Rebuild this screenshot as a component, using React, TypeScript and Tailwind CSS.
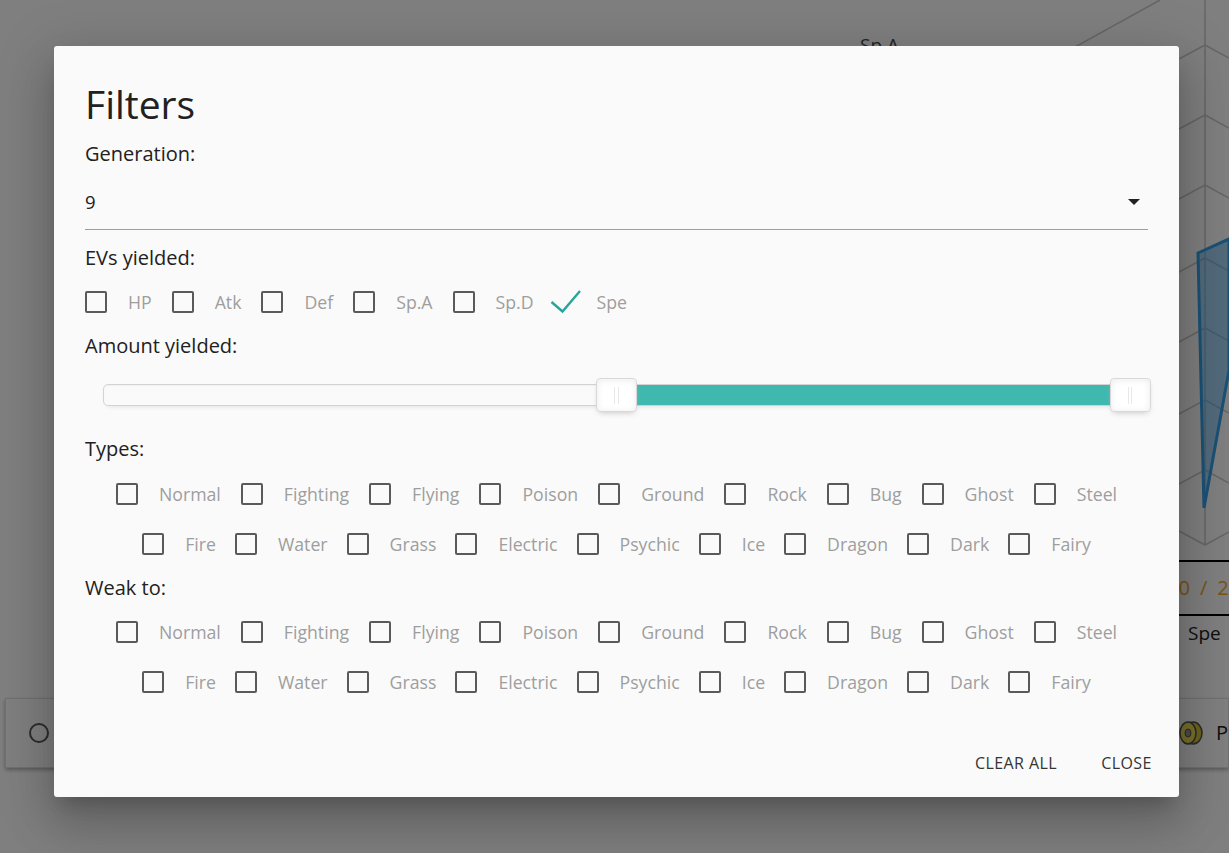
import React from "react";

const TYPES_ROW1 = ["Normal", "Fighting", "Flying", "Poison", "Ground", "Rock", "Bug", "Ghost", "Steel"];
const TYPES_ROW2 = ["Fire", "Water", "Grass", "Electric", "Psychic", "Ice", "Dragon", "Dark", "Fairy"];
const EVS = ["HP", "Atk", "Def", "Sp.A", "Sp.D", "Spe"];

function Check({ label, checked = false }: { label: string; checked?: boolean }) {
  return (
    <label className="flex h-[30px] items-center">
      <span className="relative h-[22px] w-[22px] shrink-0">
        {checked ? (
          <svg className="absolute left-[-4px] top-[-1px]" width="32" height="26" viewBox="0 0 32 26">
            <polyline points="1.5,12 12.5,21.5 30,1" fill="none" stroke="#26a69a" strokeWidth="2.4" />
          </svg>
        ) : (
          <span className="block h-[22px] w-[22px] rounded-[2px] border-[2.4px] border-[#5a5a5a]" />
        )}
      </span>
      <span className="ml-[21px] text-[17.7px] leading-[30px] text-[#9e9e9e]">{label}</span>
    </label>
  );
}

function TypeRows({ tight = false }: { tight?: boolean }) {
  return (
    <div className={tight ? "mt-[7px]" : "mt-[8px]"}>
      <div className="flex h-[50px] items-center justify-center gap-[20px]">
        {TYPES_ROW1.map((t) => (
          <Check key={t} label={t} />
        ))}
      </div>
      <div className="flex h-[50px] items-center justify-center gap-[19px]">
        {TYPES_ROW2.map((t) => (
          <Check key={t} label={t} />
        ))}
      </div>
    </div>
  );
}

function Handle({ side }: { side: "left" | "right" }) {
  return (
    <div
      className={
        side === "left"
          ? "absolute left-[calc(50%-20.5px)] top-0 h-[34px] w-[41px] rounded-[4px] border border-[#d9d9d9] bg-white shadow-[inset_0_0_1px_#fff,inset_0_1px_7px_#ebebeb,0_3px_6px_-3px_#bbb]"
          : "absolute right-[-20.5px] top-0 h-[34px] w-[41px] rounded-[4px] border border-[#d9d9d9] bg-white shadow-[inset_0_0_1px_#fff,inset_0_1px_7px_#ebebeb,0_3px_6px_-3px_#bbb]"
      }
    >
      <div className="flex h-full items-center justify-center gap-[2.5px]">
        <span className="h-[17px] w-px bg-[#e8e8e8]" />
        <span className="h-[17px] w-px bg-[#e8e8e8]" />
      </div>
    </div>
  );
}

function Slider() {
  return (
    <div className="relative mx-[18px] mt-[20px] h-[34px]">
      <div className="absolute inset-x-0 top-[6px] h-[22px] overflow-hidden rounded-[5px] border border-[#d3d3d3] bg-[#fafafa] shadow-[inset_0_1px_1px_#f0f0f0,0_3px_6px_-5px_#bbb]">
        <div className="absolute bottom-0 left-1/2 right-0 top-0 bg-[#3fb8af]" />
      </div>
      <Handle side="left" />
      <Handle side="right" />
    </div>
  );
}

function Background() {
  const chevrons = [45, 115, 185, 258, 328, 400, 470];
  return (
    <div className="flex h-[853px] w-[1229px] flex-col overflow-hidden bg-white">
      <div className="flex h-[698px]">
        <div className="flex-1" />
        <div className="flex w-[430px] flex-col">
          <svg width="430" height="560" viewBox="0 0 430 560">
            <line x1="180" y1="100" x2="361" y2="0" stroke="#cccccc" strokeWidth="1.5" />
            <line x1="406" y1="0" x2="406" y2="545" stroke="#cccccc" strokeWidth="1.5" />
            {chevrons.map((y) => (
              <g key={y}>
                <line x1="380" y1={y + 14} x2="406" y2={y} stroke="#cccccc" strokeWidth="1.5" />
                <line x1="406" y1={y} x2="430" y2={y + 13} stroke="#cccccc" strokeWidth="1.5" />
              </g>
            ))}
            <line x1="380" y1="531" x2="406" y2="545" stroke="#cccccc" strokeWidth="1.5" />
            <line x1="406" y1="545" x2="430" y2="532" stroke="#cccccc" strokeWidth="1.5" />
            <polygon
              points="399,253 430,239 430,370 405,508"
              fill="rgba(54,162,235,0.45)"
              stroke="rgb(54,162,235)"
              strokeWidth="3"
            />
            <text x="61" y="52" fontSize="19" fill="#444" fontFamily="Open Sans, sans-serif">
              Sp.A
            </text>
          </svg>
          <div className="border-t-2 border-black font-['Open_Sans',sans-serif]">
            <div className="flex h-[52px] items-center gap-[10px] pl-[368px] text-[20px] text-[#f0a830]">
              <span>10</span>
              <span>/</span>
              <span>252</span>
            </div>
            <div className="flex h-[36px] items-center border-t-2 border-black pl-[389px] text-[19px] text-[#222]">
              Spe
            </div>
          </div>
        </div>
      </div>
      <div className="ml-[5px] flex h-[70px] items-center border border-[#e0e0e0] bg-white font-['Open_Sans',sans-serif] shadow-[0_2px_4px_rgba(0,0,0,0.3)]">
        <span className="ml-[23px] h-[20px] w-[20px] rounded-full border-2 border-[#5a5a5a]" />
        <div className="flex-1" />
        <svg width="28" height="26" viewBox="0 0 28 26" className="mr-[11px] shrink-0">
          <ellipse cx="16" cy="13" rx="9" ry="11" fill="#d8c838" stroke="#555" strokeWidth="1.5" />
          <ellipse cx="11" cy="13" rx="8" ry="11" fill="#f0e050" stroke="#555" strokeWidth="1.5" />
          <ellipse cx="11" cy="13" rx="3" ry="4" fill="#999" stroke="#555" strokeWidth="1" />
        </svg>
        <span className="w-[12px] overflow-hidden whitespace-nowrap text-[20px] text-[#222]">Pe</span>
      </div>
    </div>
  );
}

export default function App() {
  return (
    <div className="relative h-[853px] w-[1229px] overflow-hidden font-['Open_Sans',sans-serif]">
      <Background />
      <div className="absolute inset-0 bg-black/50" />
      <div className="absolute left-[54px] top-[46px] flex h-[751px] w-[1125px] flex-col rounded-[3px] bg-[#fafafa] shadow-[0_29px_46px_4px_rgba(0,0,0,0.14),0_11px_55px_10px_rgba(0,0,0,0.12),0_13px_18px_-8px_rgba(0,0,0,0.2)]">
        <div className="px-[31px] pt-[34px] text-[#212121]">
          <h4 className="text-[39px] leading-[48px]">Filters</h4>
          <div className="mt-[14px] text-[20px] leading-[24px]">Generation:</div>
          <div className="flex h-[64px] items-end justify-between border-b border-[#9e9e9e] pb-[15px]">
            <span className="text-[18.5px] leading-[24px]">9</span>
            <svg className="mb-[2px] mr-[2px]" width="24" height="20" viewBox="0 3 24 20">
              <path d="M6 10l6 6 6-6z" fill="rgba(0,0,0,0.87)" />
            </svg>
          </div>
          <div className="mt-[16px] text-[20px] leading-[24px]">EVs yielded:</div>
          <div className="mt-[14px] flex h-[36px] items-center gap-[20px]">
            {EVS.map((e) => (
              <Check key={e} label={e} checked={e === "Spe"} />
            ))}
          </div>
          <div className="mt-[14px] text-[20px] leading-[24px]">Amount yielded:</div>
          <Slider />
          <div className="mt-[25px] text-[20px] leading-[24px]">Types:</div>
          <TypeRows />
          <div className="mt-[7px] text-[20px] leading-[24px]">Weak to:</div>
          <TypeRows tight />
        </div>
        <div className="flex-1" />
        <div className="flex justify-end gap-[22px] pb-[12px] pr-[14px]">
          <button className="h-[44px] w-[100px] text-[16px] uppercase tracking-[0.4px] text-[#343434]">
            Clear all
          </button>
          <button className="h-[44px] w-[77px] text-[16px] uppercase tracking-[0.4px] text-[#343434]">
            Close
          </button>
        </div>
      </div>
    </div>
  );
}
